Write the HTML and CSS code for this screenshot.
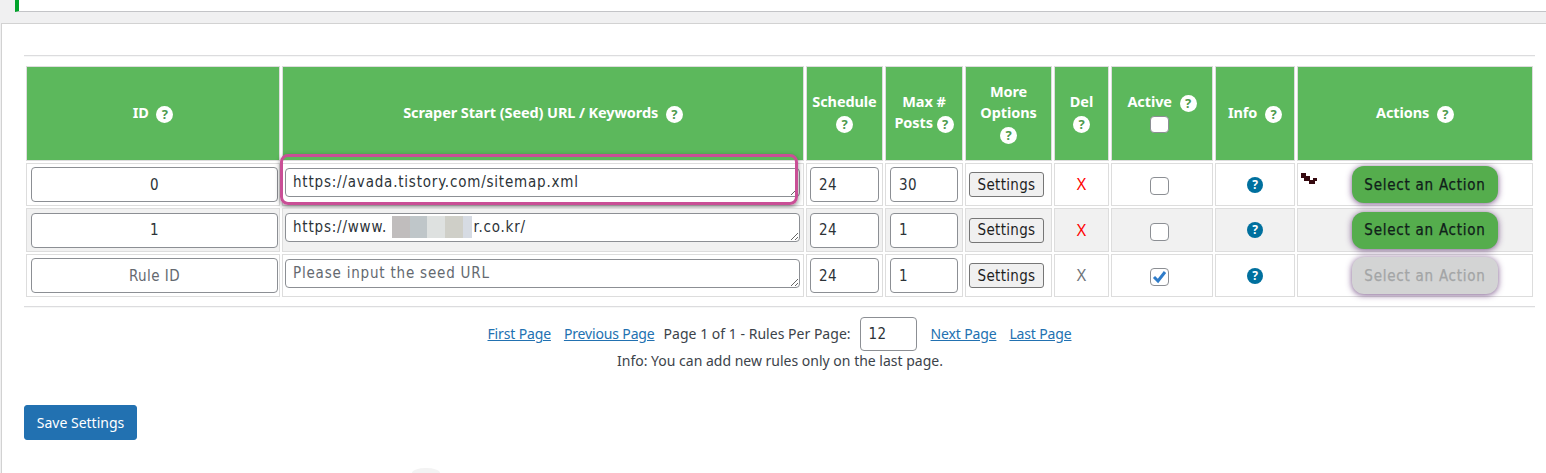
FILE: index.html
```html
<!DOCTYPE html>
<html lang="en">
<head>
<meta charset="utf-8">
<title>Scraper Rules</title>
<link rel="stylesheet" href="styles.css">
</head>
<body>
<div class="notice"></div>
<main class="panel">
  <hr class="rule rule-top">
  <table class="rules">
    <colgroup>
      <col class="c-id"><col class="c-url"><col class="c-sch"><col class="c-max"><col class="c-more"><col class="c-del"><col class="c-act"><col class="c-info"><col class="c-actions">
    </colgroup>
    <thead>
      <tr>
        <th>ID <span class="help">?</span></th>
        <th>Scraper Start (Seed) URL / Keywords <span class="help">?</span></th>
        <th>Schedule<br><span class="help">?</span></th>
        <th>Max #<br>Posts <span class="help">?</span></th>
        <th>More<br>Options<br><span class="help">?</span></th>
        <th>Del<br><span class="help">?</span></th>
        <th>Active <span class="help">?</span><br><input class="check check-head" type="checkbox"></th>
        <th>Info <span class="help">?</span></th>
        <th>Actions <span class="help">?</span></th>
      </tr>
    </thead>
    <tbody>
      <tr>
        <td class="p-id"><input class="field center" type="text" value="0"></td>
        <td class="p-url">
          <textarea class="area">https://avada.tistory.com/sitemap.xml</textarea>
          <div class="highlight"></div>
        </td>
        <td class="p-sch"><input class="field" type="text" value="24"></td>
        <td class="p-max"><input class="field" type="text" value="30"></td>
        <td class="center"><button class="settings" type="button">Settings</button></td>
        <td class="center del">X</td>
        <td class="center p-check"><input class="check" type="checkbox"></td>
        <td class="center"><span class="info">?</span></td>
        <td class="center p-actions">
          <svg class="loader" width="20" height="12" viewBox="0 0 20 12" aria-hidden="true"><path fill="#35090f" d="M0 0h5v3h4v4h3V5h4v3h-2v3H8V8H3V5H0z"/></svg>
          <button class="action" type="button">Select an Action</button>
        </td>
      </tr>
      <tr class="even">
        <td class="p-id"><input class="field center" type="text" value="1"></td>
        <td class="p-url">
          <textarea class="area">https://www.                 r.co.kr/</textarea>
          <div class="mosaic"><i class="m1"></i><i class="m2"></i><i class="m3"></i><i class="m4"></i><i class="m5"></i></div>
        </td>
        <td class="p-sch"><input class="field" type="text" value="24"></td>
        <td class="p-max"><input class="field" type="text" value="1"></td>
        <td class="center"><button class="settings" type="button">Settings</button></td>
        <td class="center del">X</td>
        <td class="center p-check"><input class="check" type="checkbox"></td>
        <td class="center"><span class="info">?</span></td>
        <td class="center p-actions">
          <span class="loader-space"></span>
          <button class="action" type="button">Select an Action</button>
        </td>
      </tr>
      <tr>
        <td class="p-id"><input class="field center" type="text" placeholder="Rule ID"></td>
        <td class="p-url"><textarea class="area" placeholder="Please input the seed URL"></textarea></td>
        <td class="p-sch"><input class="field" type="text" value="24"></td>
        <td class="p-max"><input class="field" type="text" value="1"></td>
        <td class="center"><button class="settings" type="button">Settings</button></td>
        <td class="center del off">X</td>
        <td class="center p-check"><input class="check" type="checkbox" checked></td>
        <td class="center"><span class="info">?</span></td>
        <td class="center p-actions">
          <span class="loader-space"></span>
          <button class="action disabled" type="button">Select an Action</button>
        </td>
      </tr>
    </tbody>
  </table>
  <hr class="rule rule-bottom">
  <nav class="pager">
    <a href="#">First Page</a>
    <a href="#">Previous Page</a>
    <span>Page 1 of 1 - Rules Per Page:</span>
    <input class="field per-page" type="text" value="12">
    <a href="#">Next Page</a>
    <a href="#">Last Page</a>
  </nav>
  <p class="hint">Info: You can add new rules only on the last page.</p>
  <button class="save" type="button">Save Settings</button>
</main>
<div class="ghost"></div>
</body>
</html>
```

FILE: styles.css
```css
* { box-sizing: border-box; }
html, body { margin: 0; height: 473px; overflow: hidden; }
body {
  position: relative;
  background: #f0f0f1;
  color: #3c434a;
  font: 14px/1.4 "Noto Sans", sans-serif;
}
.notice {
  height: 12px;
  margin-left: 15px;
  background: #fff;
  border-left: 4px solid #00a32a;
  border-bottom: 1px solid #c3c4c7;
}
.panel {
  height: 450px;
  margin: 11px 0 0 1px;
  padding: 31px 11px 0 22px;
  background: #fff;
  border: 1px solid #d2d2d2;
  border-right: 0;
  border-bottom: 0;
}
.rule { margin: 0; border: 0; border-top: 1px solid #dcdcde; border-bottom: 1px solid #f6f7f7; }
.rule-top { margin-bottom: 7px; }
.rule-bottom { margin-top: 7px; }

.rules {
  width: 1511px;
  table-layout: fixed;
  border-collapse: separate;
  border-spacing: 2px;
}
.c-id { width: 254px; }
.c-url { width: 522px; }
.c-sch { width: 77px; }
.c-max { width: 78px; }
.c-more { width: 87px; }
.c-del { width: 55px; }
.c-act { width: 102px; }
.c-info { width: 80px; }
.c-actions { width: 236px; }

.rules th, .rules td { border: 1px solid #ddd; }
.rules th {
  height: 95px;
  padding: 0 0 3px;
  background: #5cb85c;
  color: #fff;
  font-weight: 700;
  font-size: 14.5px;
  line-height: 21px;
  letter-spacing: -0.1px;
  text-align: center;
  vertical-align: middle;
}
.rules td { height: 43px; padding: 3px; vertical-align: middle; }
.rules tr.even td { background: #f1f1f1; height: 44px; }
.rules td.center { text-align: center; }

.p-id.p-id { padding: 3px 1px 3px 4px; }
.p-url.p-url { position: relative; padding: 4px 3px 0 2px; vertical-align: top; }
.p-max.p-max { padding: 3px 4px; }
.p-check.p-check { padding-right: 8px; }

.help {
  display: inline-block;
  width: 17px;
  height: 17px;
  margin-left: 4px;
  border-radius: 50%;
  background: #fff;
  color: #4d9a4d;
  font-size: 13px;
  line-height: 17px;
  font-weight: 700;
  letter-spacing: 0;
  text-align: center;
  vertical-align: -1px;
}
th br + .help { margin-left: 0; }

.field, .area {
  display: block;
  width: 100%;
  border: 1px solid #8c8f94;
  border-radius: 4px;
  background: #fff;
  color: #2c3338;
  font: 15px/20px "DejaVu Sans", sans-serif;
  font-stretch: condensed;
  letter-spacing: 0.45px;
}
.field { height: 35px; padding: 0 8px; }
.field.center { text-align: center; }
.area { height: 29px; padding: 3px 7px 0; resize: both; overflow: hidden; white-space: pre; letter-spacing: 0.8px; }
.field::placeholder, .area::placeholder { color: #646970; opacity: 1; }

.highlight {
  position: absolute;
  left: -3px;
  top: -10px;
  width: 518px;
  height: 51px;
  border: 3px solid #c94f96;
  border-radius: 8px;
  box-shadow: 0 2px 5px rgba(0, 0, 0, .45);
  pointer-events: none;
}
.mosaic { position: absolute; left: 109px; top: 7px; display: flex; height: 22px; }
.mosaic i { display: block; }
.m1 { width: 18px; background: #c0bdbd; }
.m2 { width: 17px; background: #bfc6c9; }
.m3 { width: 18px; background: #dee1e0; }
.m4 { width: 18px; background: #cfcfc8; }
.m5 { width: 9px; background: #d6dbe3; }

.settings {
  width: 75px;
  height: 25px;
  margin-right: 4px;
  padding: 0;
  border: 1px solid #767676;
  border-radius: 3px;
  background: #f0f0f0;
  color: #1e1e1e;
  font: 15px "DejaVu Sans", sans-serif;
  font-stretch: condensed;
  letter-spacing: 0.3px;
}
.del { color: #f00; font-size: 16px; }
.del.off { color: #6f7479; }

.check {
  appearance: none;
  display: inline-block;
  width: 19px;
  height: 18px;
  margin: 2px 0 0;
  border: 1px solid #8c8f94;
  border-radius: 4px;
  background: #fff;
  vertical-align: middle;
}
.check:checked {
  background: #fff url("data:image/svg+xml,%3Csvg xmlns='http://www.w3.org/2000/svg' viewBox='0 0 19 18'%3E%3Cpath fill='none' stroke='%232f7cc9' stroke-width='3' d='M4 9l4 4 7-9'/%3E%3C/svg%3E") center / 19px 18px no-repeat;
}
.check-head { margin: 1px 5px 0 0; height: 17px; }

.info {
  display: inline-block;
  width: 16px;
  height: 16px;
  margin-bottom: 2px;
  border-radius: 50%;
  background: #00709e;
  color: #fff;
  font-size: 12px;
  font-weight: 700;
  line-height: 16px;
  text-align: center;
  vertical-align: middle;
}

.p-actions.p-actions { padding: 2px 3px; }
.loader, .loader-space { float: left; display: block; width: 20px; height: 12px; margin-top: 7px; }
.action {
  width: 146px;
  height: 37px;
  padding: 0;
  border: 0;
  border-radius: 12px;
  background: #55ad4d;
  color: #10201a;
  font: 15px "DejaVu Sans", sans-serif;
  font-stretch: condensed;
  letter-spacing: 0.75px;
  -webkit-text-stroke: 0.25px currentColor;
  box-shadow: 0 1px 6px 0 rgba(90, 45, 110, .8);
}
.action.disabled { background: #d3d4d4; color: #a3a5a6; }

.pager {
  display: flex;
  justify-content: center;
  align-items: center;
  height: 34px;
  margin-top: 9px;
  padding-left: 13px;
}
.pager a { color: #2271b1; margin-right: 13px; letter-spacing: -0.15px; }
.pager span { margin-left: -4px; margin-right: 9px; letter-spacing: 0.02px; }
.pager .per-page { width: 57px; height: 34px; margin-right: 14px; padding: 0 8px; font-size: 15px; letter-spacing: 0.3px; }
.hint { margin: 0; height: 20px; text-align: center; padding-left: 1px; }
.save {
  display: block;
  width: 113px;
  height: 35px;
  margin-top: 34px;
  border: 1px solid #2271b1;
  border-radius: 3px;
  background: #2271b1;
  color: #fff;
  font: 14px "Noto Sans", sans-serif;
  padding: 0;
}
.ghost {
  position: absolute;
  left: 412px;
  top: 468px;
  width: 28px;
  height: 5px;
  border-radius: 50% 50% 0 0 / 100% 100% 0 0;
  background: #f3f3f3;
}
```
